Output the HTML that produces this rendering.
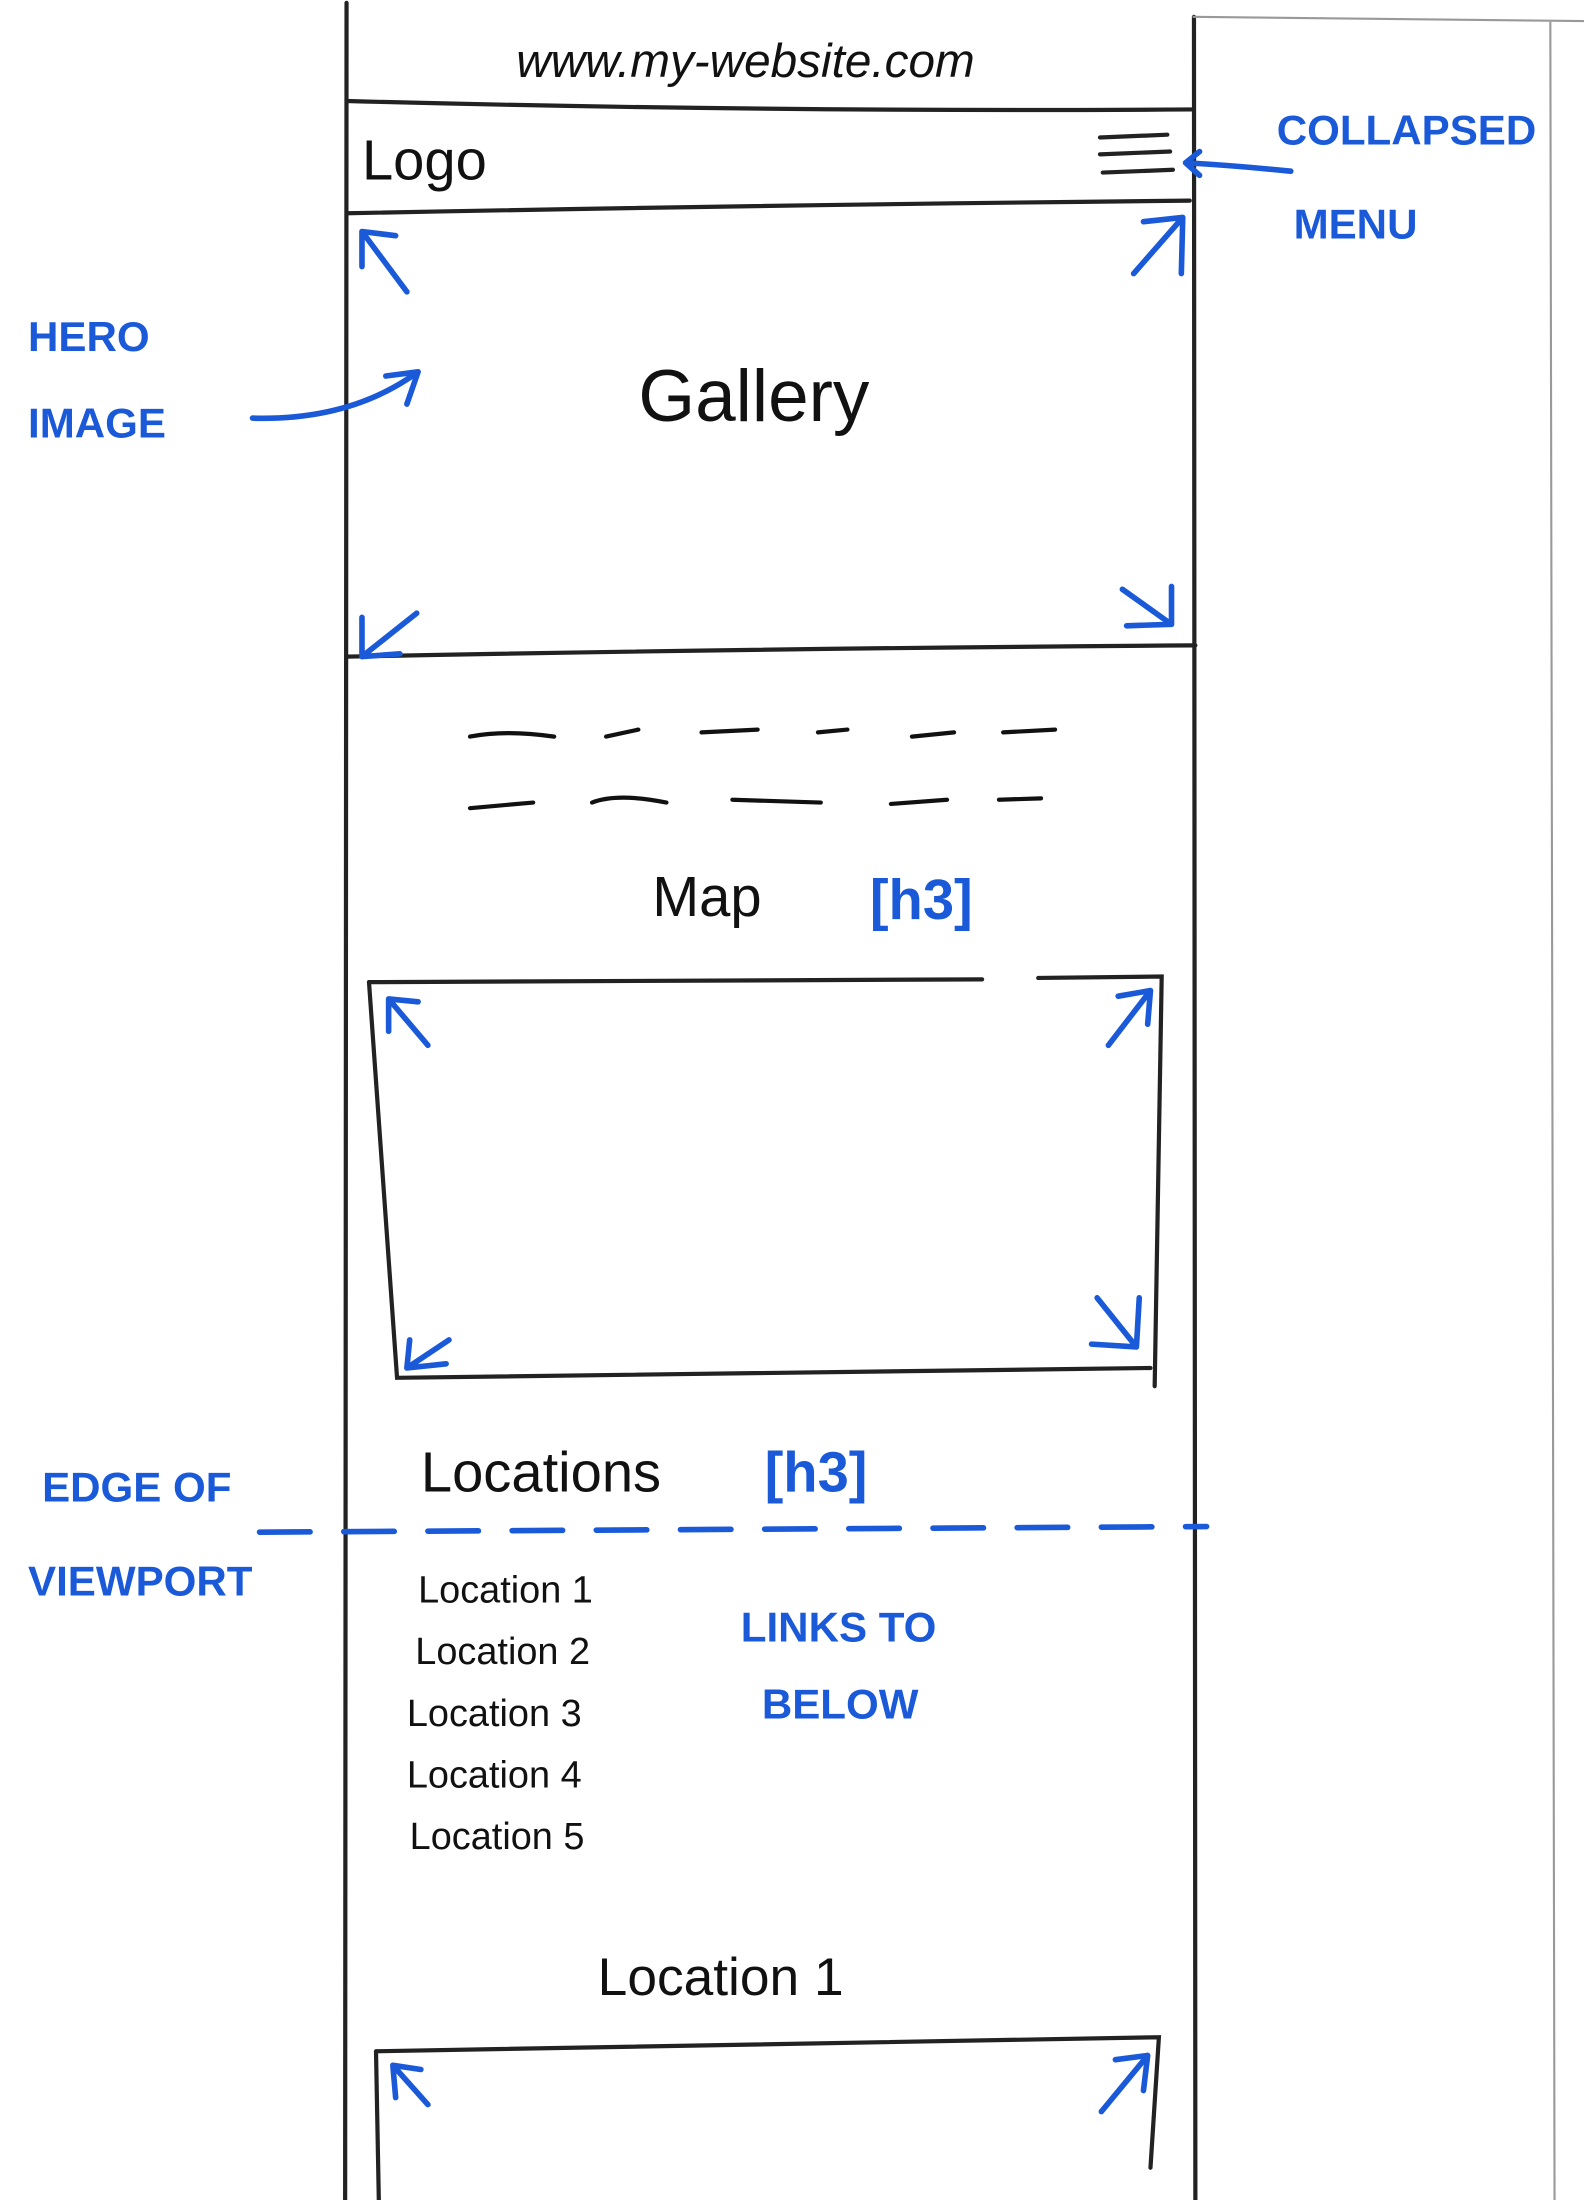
<!DOCTYPE html>
<html><head><meta charset="utf-8"><style>
html,body{margin:0;padding:0;background:#fff;width:1584px;height:2200px;overflow:hidden}
svg{display:block}
text{font-family:"Liberation Sans",sans-serif}
.k{fill:#111}
.b{fill:#1a5ad8;font-weight:bold}
</style></head><body>
<svg width="1584" height="2200" viewBox="0 0 1129 1568" preserveAspectRatio="none" xmlns="http://www.w3.org/2000/svg">
<g fill="none" stroke="#222" stroke-width="3" stroke-linecap="round">
<path d="M247 2 L246 1568"/>
<path d="M851 12 L852 1568"/>
<path d="M247 72 Q550 80 850 78"/>
<path d="M247 152 Q550 146 848 143"/>
<path d="M247 468 Q550 462 852 460"/>
<path d="M263 700 L700 698 M740 697 L828 696 L823 988"/>
<path d="M263 700 L283 982 L820 975"/>
<path d="M268 1462 L270 1568 M268 1462 L826 1452 L820 1545"/>
<path d="M784 98 L832 96 M784 110 L834 108 M786 123 L836 121"/>
</g>
<path d="M850 12 L1130 15 M1105 15 L1108 1568" stroke="#999" stroke-width="1.5" fill="none"/>
<text x="368" y="55" font-size="34" class="k" font-style="italic">www.my-website.com</text>
<text x="258" y="128" font-size="40" class="k">Logo</text>
<text x="455" y="300" font-size="52" class="k">Gallery</text>
<g fill="none" stroke="#111" stroke-width="3" stroke-linecap="round">
<path d="M335 525 Q360 520 395 525 M432 525 L455 520 M500 522 L540 520 M583 522 L604 520 M650 525 L680 522 M715 522 L752 520"/>
<path d="M335 576 L380 572 M422 572 Q440 565 475 572 M522 570 L585 572 M635 573 L675 570 M712 570 L742 569"/>
</g>
<text x="465" y="653" font-size="40" class="k">Map</text>
<text x="620" y="655" font-size="40" class="b">[h3]</text>
<text x="300" y="1063" font-size="40" class="k">Locations</text>
<text x="545" y="1063" font-size="40" class="b">[h3]</text>
<g class="k" font-size="27">
<text x="298" y="1142">Location 1</text>
<text x="296" y="1186">Location 2</text>
<text x="290" y="1230">Location 3</text>
<text x="290" y="1274">Location 4</text>
<text x="292" y="1318">Location 5</text>
</g>
<text x="426" y="1422" font-size="38" class="k">Location 1</text>
<g class="b" font-size="30">
<text x="20" y="250">HERO</text>
<text x="20" y="312">IMAGE</text>
<text x="910" y="103">COLLAPSED</text>
<text x="922" y="170">MENU</text>
<text x="30" y="1070">EDGE OF</text>
<text x="20" y="1137">VIEWPORT</text>
<text x="528" y="1170">LINKS TO</text>
<text x="543" y="1225">BELOW</text>
</g>
<g fill="none" stroke="#1a5ad8" stroke-width="4" stroke-linecap="round" stroke-linejoin="round">
<path d="M290 208 L258 165 M258 165 L258 190 M258 165 L282 168"/>
<path d="M808 195 L843 155 M843 155 L815 158 M843 155 L842 195"/>
<path d="M297 437 L258 468 M258 468 L258 440 M258 468 L285 466"/>
<path d="M800 420 L835 445 M835 445 L835 418 M835 445 L803 446"/>
<path d="M180 298 Q250 300 298 265 M298 265 L275 268 M298 265 L290 288"/>
<path d="M920 122 Q880 118 845 116 L855 108 M845 116 L855 125"/>
<path d="M305 745 L277 712 M277 712 L277 735 M277 712 L298 714"/>
<path d="M790 745 L820 706 M820 706 L797 710 M820 706 L818 730"/>
<path d="M320 955 L290 975 M290 975 L292 955 M290 975 L318 972"/>
<path d="M782 925 L810 960 M810 960 L812 925 M810 960 L778 958"/>
<path d="M305 1500 L280 1472 M280 1472 L282 1495 M280 1472 L300 1475"/>
<path d="M785 1505 L818 1465 M818 1465 L795 1468 M818 1465 L815 1490"/>
<path d="M185 1092 L860 1088" stroke-dasharray="36 24"/>
</g>
</svg>
</body></html>
